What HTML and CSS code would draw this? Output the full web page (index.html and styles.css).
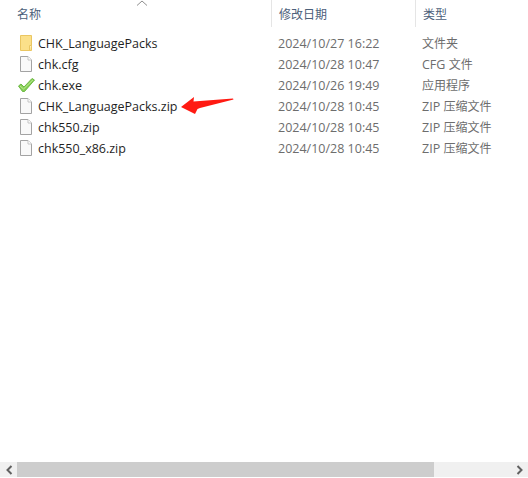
FILE: index.html
```html
<!DOCTYPE html>
<html lang="zh">
<head>
<meta charset="utf-8">
<title>文件列表</title>
<link rel="stylesheet" href="styles.css">
</head>
<body>
<div class="window">
  <svg class="sort" width="12" height="6" viewBox="0 0 12 6"><path d="M1 5.5 L6 1 L11 5.5" fill="none" stroke="#8f8f8f" stroke-width="1"/></svg>
  <div class="header">
    <div class="h name">名称</div>
    <div class="h date">修改日期</div>
    <div class="h type">类型</div>
  </div>
  <div class="list">
    <div class="row">
      <div class="name-cell">
        <svg class="icon" width="18" height="18" viewBox="0 0 18 18"><path d="M2.5 1.5 H13.5 V16.5 H2.5 Z" fill="#fbe08a" stroke="#eac662"/><path d="M11.5 16.5 V11.5 H13.5" fill="#fff0b8" stroke="#eac662"/></svg>
        <span>CHK_LanguagePacks</span>
      </div>
      <div class="date-cell">2024/10/27 16:22</div>
      <div class="type-cell"><span class="cjk">文件夹</span></div>
    </div>
    <div class="row">
      <div class="name-cell">
        <svg class="icon" width="18" height="18" viewBox="0 0 18 18"><path d="M2.5 1.5 H10 L13.5 5 V16.5 H2.5 Z" fill="#f9f9f9" stroke="#a3a3a3"/><path d="M10 1.5 V5 H13.5" fill="#fff" stroke="#c4c4c4"/></svg>
        <span>chk.cfg</span>
      </div>
      <div class="date-cell">2024/10/28 10:47</div>
      <div class="type-cell">CFG <span class="cjk">文件</span></div>
    </div>
    <div class="row">
      <div class="name-cell">
        <svg class="icon" width="18" height="18" viewBox="0 0 18 18"><path d="M0.5 10 L3 8 L6 11 L14 2.5 L16.5 4 L6.5 15.5 L4.5 15.5 Z" fill="#86cf55" stroke="#63b23a" stroke-width="0.9" stroke-linejoin="round"/><path d="M2 10 L5.5 13 L15 3.8" fill="none" stroke="#c2eb9a" stroke-width="0.9"/></svg>
        <span>chk.exe</span>
      </div>
      <div class="date-cell">2024/10/26 19:49</div>
      <div class="type-cell"><span class="cjk">应用程序</span></div>
    </div>
    <div class="row">
      <div class="name-cell">
        <svg class="icon" width="18" height="18" viewBox="0 0 18 18"><path d="M2.5 1.5 H10 L13.5 5 V16.5 H2.5 Z" fill="#f9f9f9" stroke="#a3a3a3"/><path d="M10 1.5 V5 H13.5" fill="#fff" stroke="#c4c4c4"/></svg>
        <span>CHK_LanguagePacks.zip</span>
      </div>
      <div class="date-cell">2024/10/28 10:45</div>
      <div class="type-cell">ZIP <span class="cjk">压缩文件</span></div>
    </div>
    <div class="row">
      <div class="name-cell">
        <svg class="icon" width="18" height="18" viewBox="0 0 18 18"><path d="M2.5 1.5 H10 L13.5 5 V16.5 H2.5 Z" fill="#f9f9f9" stroke="#a3a3a3"/><path d="M10 1.5 V5 H13.5" fill="#fff" stroke="#c4c4c4"/></svg>
        <span>chk550.zip</span>
      </div>
      <div class="date-cell">2024/10/28 10:45</div>
      <div class="type-cell">ZIP <span class="cjk">压缩文件</span></div>
    </div>
    <div class="row">
      <div class="name-cell">
        <svg class="icon" width="18" height="18" viewBox="0 0 18 18"><path d="M2.5 1.5 H10 L13.5 5 V16.5 H2.5 Z" fill="#f9f9f9" stroke="#a3a3a3"/><path d="M10 1.5 V5 H13.5" fill="#fff" stroke="#c4c4c4"/></svg>
        <span>chk550_x86.zip</span>
      </div>
      <div class="date-cell">2024/10/28 10:45</div>
      <div class="type-cell">ZIP <span class="cjk">压缩文件</span></div>
    </div>
  </div>
  <svg class="arrow" width="54" height="18" viewBox="0 0 54 18"><path d="M1 10 L14 0 L13.5 4.5 L53 1.5 L53.5 2.5 L20 11 L17.5 12 L15 17 Z" fill="#ff1a12"/></svg>
  <div class="scrollbar">
    <div class="btn"><svg width="8" height="10" viewBox="0 0 8 10"><path d="M6.5 1 L2.5 5 L6.5 9" fill="none" stroke="#606060" stroke-width="2"/></svg></div>
    <div class="track"><div class="thumb"></div></div>
    <div class="btn"><svg width="8" height="10" viewBox="0 0 8 10"><path d="M1.5 1 L5.5 5 L1.5 9" fill="none" stroke="#606060" stroke-width="2"/></svg></div>
  </div>
</div>
</body>
</html>
```
FILE: styles.css
```css
* { box-sizing: border-box; }
html, body { margin: 0; padding: 0; background: #fff; }
.window {
  position: relative;
  width: 528px;
  height: 478px;
  display: flex;
  flex-direction: column;
  overflow: hidden;
  font-family: "Open Sans", "Noto Sans CJK SC", sans-serif;
  font-size: 12.5px;
  color: #1f1f1f;
}
.cjk { font-family: "Noto Sans CJK SC", sans-serif; font-size: 12px; line-height: 1; }
.sort { position: absolute; left: 136px; top: 0; }
.header {
  display: grid;
  grid-template-columns: 271px 144px 1fr;
  height: 27px;
}
.h {
  padding-left: 7px;
  line-height: 27px;
  font-size: 12px;
  color: #4c607a;
  font-family: "Noto Sans CJK SC", sans-serif;
}
.name { padding-left: 17px; }
.date, .type { border-left: 1px solid #e5e5e5; }
.list {
  flex: 1;
  padding-top: 6px;
}
.row {
  display: grid;
  grid-template-columns: 271px 144px 1fr;
  grid-template-rows: 21px;
  height: 21px;
  line-height: 21px;
}
.name-cell {
  display: flex;
  align-items: flex-start;
  gap: 2px;
  padding-left: 18px;
}
.icon { flex: none; margin-top: 1px; }
.date-cell { padding-left: 7px; color: #6d6d6d; }
.type-cell { padding-left: 7px; color: #6d6d6d; }
.arrow { position: absolute; left: 180px; top: 97px; }
.scrollbar {
  display: flex;
  height: 15px;
  margin-bottom: 1px;
  background: #f0f0f0;
}
.btn {
  width: 17px;
  flex: none;
  display: flex;
  align-items: center;
  justify-content: center;
}
.track { flex: 1; }
.thumb { width: 417px; height: 100%; background: #cdcdcd; }
```
